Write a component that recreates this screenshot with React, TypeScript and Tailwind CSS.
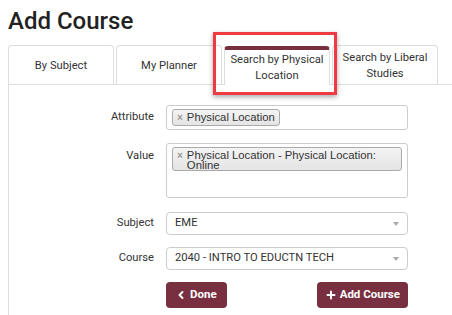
import { ChevronLeft, Plus } from 'lucide-react';

const tabs = [
    { label: 'By Subject', active: false },
    { label: 'My Planner', active: false },
    { label: 'Search by Physical Location', active: true },
    { label: 'Search by Liberal Studies', active: false },
];

const SelectBox = ({ value }: { value: string }) => (
    <div className="flex h-[23px] w-[242px] items-center justify-between rounded-[4px] border border-[#cccccc] bg-white pl-2 pr-2 text-[11.2px] text-[#333]">
        <span>{value}</span>
        <span className="h-0 w-0 border-x-[3px] border-t-[4px] border-x-transparent border-t-[#aaaaaa]"></span>
    </div>
);

export default function App() {
    return (
        <div className="relative h-[315px] w-[452px] overflow-hidden bg-white font-['Roboto',sans-serif] text-[#333]">
            <h1 className="pl-2 pt-[7px] text-[24px] font-medium leading-[28px] text-[#222]">Add Course</h1>

            <div className="mt-[10px] flex gap-[2px] pl-2">
                {tabs.map((t) =>
                    t.active ? (
                        <div
                            key={t.label}
                            className="z-10 -mb-px mt-px flex h-[39px] w-[106px] items-center justify-center rounded-t-[4px] border-x border-t-[4px] border-x-[#dddddd] border-t-[#782f40] bg-white text-center text-[11.2px] leading-[16px] text-[#333]"
                        >
                            <span className="block w-[100px]">
                                Search by Physical
                                <br />
                                Location
                            </span>
                        </div>
                    ) : (
                        <div
                            key={t.label}
                            className="flex h-[39px] w-[106px] items-center justify-center rounded-t-[4px] border border-b-0 border-[#dddddd] bg-white px-1 pt-[2px] text-center text-[11.2px] leading-[16px] text-[#333]"
                        >
                            {t.label}
                        </div>
                    )
                )}
            </div>

            <div className="ml-2 border-l border-t border-[#dddddd] pt-[20px]">
                <div className="flex flex-col gap-[13px]">
                    <div className="flex items-center gap-3">
                        <div className="w-[145px] text-right text-[11.2px]">Attribute</div>
                        <div className="flex h-[25px] w-[242px] items-center rounded-[3px] border border-[#cccccc] px-[5px]">
                            <div className="flex h-[17px] items-center gap-1 rounded-[3px] border border-[#aaaaaa] bg-gradient-to-b from-[#f4f4f4] to-[#e4e4e4] px-1 text-[11.3px] text-[#333] font-['Liberation_Sans',Arial,sans-serif]">
                                <span className="text-[10px] font-bold text-[#999]">×</span>
                                <span>Physical Location</span>
                            </div>
                        </div>
                    </div>

                    <div className="flex items-start gap-3">
                        <div className="w-[145px] pt-[5px] text-right text-[11.2px]">Value</div>
                        <div className="h-[55px] w-[242px] rounded-[3px] border border-[#cccccc] px-[5px] pt-[3px]">
                            <div className="flex h-[24px] items-start gap-1 rounded-[3px] border border-[#aaaaaa] bg-gradient-to-b from-[#f4f4f4] to-[#e4e4e4] px-1 pt-[2px] text-[11.3px] leading-[10px] text-[#333] font-['Liberation_Sans',Arial,sans-serif]">
                                <span className="text-[10px] leading-[11px] font-bold text-[#999]">×</span>
                                <span>
                                    Physical Location - Physical Location:
                                    <br />
                                    Online
                                </span>
                            </div>
                        </div>
                    </div>
                </div>

                <div className="mt-[14px] flex flex-col gap-[12px]">
                    <div className="flex items-center gap-3">
                        <div className="w-[145px] text-right text-[11.2px]">Subject</div>
                        <SelectBox value="EME" />
                    </div>
                    <div className="flex items-center gap-3">
                        <div className="w-[145px] text-right text-[11.2px]">Course</div>
                        <SelectBox value="2040 - INTRO TO EDUCTN TECH" />
                    </div>
                </div>

                <div className="ml-[157px] mt-[12px] flex w-[242px] justify-between pb-4">
                    <button className="flex h-[26px] items-center gap-[3px] rounded-[4px] bg-[#782f40] pl-[9px] pr-[10px] text-[11.5px] font-bold text-white">
                        <ChevronLeft size={12} strokeWidth={4} />
                        Done
                    </button>
                    <button className="flex h-[26px] items-center gap-[3px] rounded-[4px] bg-[#782f40] px-[8px] text-[11.5px] font-bold text-white">
                        <Plus size={12} strokeWidth={4} />
                        Add Course
                    </button>
                </div>
            </div>

            <div className="absolute left-[213px] top-[32px] h-[63px] w-[124px] border-[3px] border-[#ee3b43] shadow-[0_2px_5px_rgba(0,0,0,0.35)]"></div>
        </div>
    );
}
